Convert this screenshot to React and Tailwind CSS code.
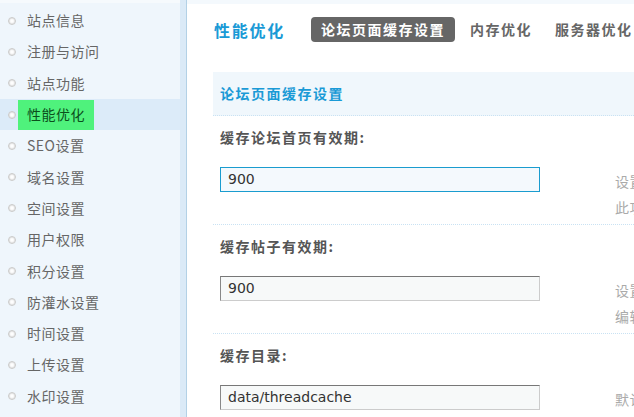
const menu = [
  "站点信息",
  "注册与访问",
  "站点功能",
  "性能优化",
  "SEO设置",
  "域名设置",
  "空间设置",
  "用户权限",
  "积分设置",
  "防灌水设置",
  "时间设置",
  "上传设置",
  "水印设置",
];

const cjk = { fontFamily: '"Noto Sans CJK SC", "DejaVu Sans", sans-serif' };
const latin = { fontFamily: '"DejaVu Sans", "Noto Sans CJK SC", sans-serif' };

const Row = ({ label, value, focused, hint, last }) => (
  <div
    className={`h-[109px] pl-[7px] pt-[11px] ${
      last ? "" : "border-b border-dotted border-[#c9e2f3]"
    }`}
  >
    <div className="text-[14px] font-bold text-[#555] leading-[20px] tracking-[1.5px]">{label}</div>
    <div className="flex mt-[20px]">
      <div
        className={`shrink-0 w-[320px] h-[25px] px-[7px] flex items-center text-[14px] text-[#333] ${
          focused
            ? "border border-[#1a9ccf] bg-[#f4f9fd]"
            : "border border-[#cccccc] border-t-[#777] border-l-[#888] bg-[#f7f9f9]"
        }`}
        style={latin}
      >
        {value}
      </div>
      <div className="shrink-0 ml-[75px] mt-[1px] text-[14px] text-[#aaa] leading-[26px] whitespace-nowrap tracking-[0.5px]">
        {hint.map((h) => (
          <div key={h}>{h}</div>
        ))}
      </div>
    </div>
  </div>
);

export default function App() {
  return (
    <div className="w-[634px] h-[417px] overflow-hidden flex bg-white" style={cjk}>
      <div className="shrink-0 w-[180px] bg-[#eff6fc] pt-[2px] border-t-[3px] border-[#f6fafd]">
        {menu.map((m) => {
          const active = m === "性能优化";
          return (
            <div
              key={m}
              className={`h-[31.3px] flex items-center ${active ? "bg-[#dcebf9]" : ""}`}
            >
              <span className="ml-[8px] w-[8px] h-[8px] rounded-full border border-[#c9c9c9] bg-white shadow-[inset_0_0_2px_#bbb]" />
              {active ? (
                <span className="ml-[2px] h-[30px] px-[9px] flex items-center bg-[#4ff27c] text-[14px] text-[#0b4f1c] tracking-[0.5px]">
                  {m}
                </span>
              ) : (
                <span className="ml-[11px] text-[14px] text-[#666] tracking-[0.5px]">{m}</span>
              )}
            </div>
          );
        })}
      </div>
      <div className="shrink-0 w-[7px] bg-[#dbeaf7] border-r border-[#b3d1e6]" />
      <div className="flex-1 min-w-0 overflow-hidden">
        <div className="h-[4px] bg-[#f4f9fd]" />
        <div className="flex items-center pl-[27px] pt-[9px] h-[42px] whitespace-nowrap">
          <span className="shrink-0 text-[16px] font-bold text-[#1a9ad6] tracking-[1.75px]">性能优化</span>
          <span className="shrink-0 ml-[26px] h-[25px] px-[10px] flex items-center rounded-[4px] bg-[#666] text-white text-[14px] font-bold tracking-[1.5px]">
            论坛页面缓存设置
          </span>
          <span className="shrink-0 ml-[15px] text-[14px] font-bold text-[#666] tracking-[1.5px]">内存优化</span>
          <span className="shrink-0 ml-[23px] text-[14px] font-bold text-[#666] tracking-[1.5px]">服务器优化</span>
        </div>
        <div className="ml-[26px] mt-[26px]">
          <div className="h-[44px] bg-[#f0f7fc] pl-[7px] flex items-center text-[14px] font-bold text-[#1a9ad6] tracking-[1.5px] border-b border-dotted border-[#c9e2f3]">
            论坛页面缓存设置
          </div>
          <Row
            label="缓存论坛首页有效期:"
            value="900"
            focused
            hint={["设置论坛首页缓存的有效期，单位秒", "此功能仅对游客有效"]}
          />
          <Row
            label="缓存帖子有效期:"
            value="900"
            hint={["设置帖子页面缓存的有效期，单位秒", "编辑帖子后需更新缓存"]}
          />
          <Row
            label="缓存目录:"
            value="data/threadcache"
            last
            hint={["默认为 data/threadcache 目录"]}
          />
        </div>
      </div>
    </div>
  );
}
